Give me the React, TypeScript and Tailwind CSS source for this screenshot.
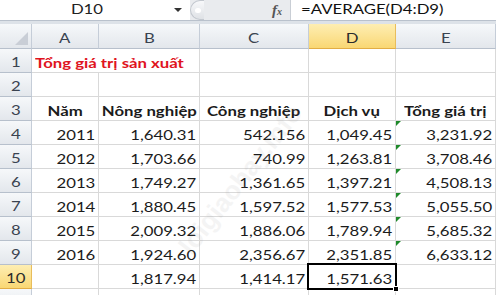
const FONT = "font-['Lato','Liberation_Sans',sans-serif]";

const COLS = ["A", "B", "C", "D", "E"];

type Row = { n: number; cells: string[]; bold?: boolean };

const ROWS: Row[] = [
  { n: 2, cells: ["", "", "", "", ""] },
  { n: 3, cells: ["Năm", "Nông nghiệp", "Công nghiệp", "Dịch vụ", "Tổng giá trị"], bold: true },
  { n: 4, cells: ["2011", "1,640.31", "542.156", "1,049.45", "3,231.92"] },
  { n: 5, cells: ["2012", "1,703.66", "740.99", "1,263.81", "3,708.46"] },
  { n: 6, cells: ["2013", "1,749.27", "1,361.65", "1,397.21", "4,508.13"] },
  { n: 7, cells: ["2014", "1,880.45", "1,597.52", "1,577.53", "5,055.50"] },
  { n: 8, cells: ["2015", "2,009.32", "1,886.06", "1,789.94", "5,685.32"] },
  { n: 9, cells: ["2016", "1,924.60", "2,356.67", "2,351.85", "6,633.12"] },
  { n: 10, cells: ["", "1,817.94", "1,414.17", "1,571.63", ""] },
  { n: 11, cells: ["", "", "", "", ""] },
];

function Txt({ children, align }: { children: React.ReactNode; align: "left" | "right" | "center" }) {
  const origin = align === "left" ? "origin-left" : align === "right" ? "origin-right" : "origin-center";
  return (
    <span className={`inline-block whitespace-nowrap scale-x-[1.24] ${origin}`}>{children}</span>
  );
}

function HeaderCell({ label, active }: { label: string; active?: boolean }) {
  return (
    <div
      className={`flex items-end justify-center border-r border-b pb-[3px] text-[13.5px] leading-none ${
        active
          ? "border-r-[#e8bd5c] border-b-[#e2ad45] bg-gradient-to-b from-[#feeeb2] to-[#f9d773] text-[#2b2b2b]"
          : "border-r-[#c5cdd8] border-b-[#b7c0cc] bg-gradient-to-b from-[#f6f8fa] to-[#e3e7ec] text-[#3a4350]"
      }`}
    >
      {label && <Txt align="center">{label}</Txt>}
    </div>
  );
}

export default function App() {
  return (
    <div className={`relative h-[295px] w-[496px] overflow-hidden bg-white ${FONT} text-[13.5px] text-[#1b1b1b]`}>
      {/* formula bar */}
      <div className="flex h-[21px] border-b border-[#b9c1cc] bg-white">
        <div className="relative flex w-[190px] items-center">
          <div className="flex-1 pb-[1px] text-center text-[13.5px] leading-none text-[#222]">
            <Txt align="center">D10</Txt>
          </div>
          <div className="mr-[8px] h-0 w-0 border-x-[4px] border-t-[4px] border-x-transparent border-t-[#333]" />
        </div>
        <div className="flex w-[100px] items-center bg-[#e9ebee]">
          <div className="flex h-[20px] w-[14px] items-center justify-center rounded-l-full border border-r-0 border-[#c3c8cf] bg-gradient-to-b from-[#f7f8fa] to-[#dfe2e6]">
            <div className="h-[5px] w-[6px] rounded-full bg-white" />
          </div>
          <div className="flex-1" />
          <div className="mr-[8px] font-['Liberation_Serif',serif] text-[15px] font-bold italic leading-none text-[#555]">
            f<span className="text-[10px]">x</span>
          </div>
        </div>
        <div className="flex flex-1 items-center border-l border-[#c9ced5] pl-[10px] text-[13.5px] leading-none text-[#111]">
          <Txt align="left">=AVERAGE(D4:D9)</Txt>
        </div>
      </div>
      <div className="h-[3px] bg-[#dde2e8]" />

      {/* sheet */}
      <div className="grid grid-cols-[32px_67px_101px_109px_87px_100px] grid-rows-[25px_repeat(11,24px)]">
        <div className="relative border-r border-b border-r-[#c5cdd8] border-b-[#b7c0cc] bg-gradient-to-b from-[#f6f8fa] to-[#e3e7ec]">
          <div className="absolute right-[3px] bottom-[3px] h-0 w-0 border-b-[13px] border-l-[13px] border-b-[#c9ced6] border-l-transparent" />
        </div>
        {COLS.map((c) => (
          <HeaderCell key={c} label={c} active={c === "D"} />
        ))}

        {/* row 1 */}
        <HeaderCell label="1" />
        <div className="col-span-2 flex items-end border-r border-b border-[#d9d9d9] pb-[2px] pl-[3px] text-[13.5px] font-bold leading-none text-[#e0141e]">
          <Txt align="left">Tổng giá trị sản xuất</Txt>
        </div>
        <div className="border-r border-b border-[#d9d9d9]" />
        <div className="border-r border-b border-[#d9d9d9]" />
        <div className="border-r border-b border-[#d9d9d9]" />

        {ROWS.map((row) => (
          <Line key={row.n} row={row} />
        ))}
      </div>

      {/* watermark */}
      <div className="pointer-events-none absolute left-[150px] top-[160px] -rotate-[52deg] whitespace-nowrap font-['Liberation_Sans',sans-serif] text-[26px] font-bold text-[#9a9a9a] opacity-[0.1]">
        loigiaohay.info
      </div>
    </div>
  );
}

function Line({ row }: { row: Row }) {
  return (
    <>
      <HeaderCell label={row.n === 11 ? "" : String(row.n)} active={row.n === 10} />
      {row.cells.map((v, i) => {
        const selected = row.n === 10 && i === 3;
        const flag = i === 4 && row.n >= 4 && row.n <= 9;
        return (
          <div
            key={i}
            className={`relative flex items-end border-r border-b border-[#d9d9d9] pb-[2px] leading-none ${
              row.bold ? "justify-center font-bold" : "justify-end pr-[3px]"
            }`}
          >
            {v && <Txt align={row.bold ? "center" : "right"}>{v}</Txt>}
            {flag && (
              <div className="absolute top-0 left-0 h-0 w-0 border-t-[5px] border-r-[5px] border-t-[#1f8a2a] border-r-transparent" />
            )}
            {selected && (
              <div className="absolute -top-[2px] -left-[2px] -right-[2px] -bottom-[2px] z-10 border-2 border-black">
                <div className="absolute -right-[4px] -bottom-[4px] h-[6px] w-[6px] border border-white bg-black" />
              </div>
            )}
          </div>
        );
      })}
    </>
  );
}
